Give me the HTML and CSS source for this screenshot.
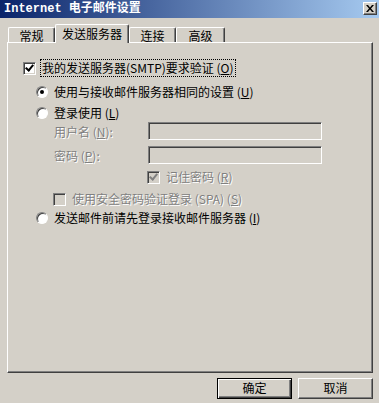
FILE: index.html
```html
<!DOCTYPE html>
<html lang="zh-CN">
<head>
  <meta charset="UTF-8" />
  <title>Internet 电子邮件设置</title>
  <link rel="stylesheet" href="styles.css">
</head>
<body>
  <div class="window">

    <!-- Title bar -->
    <div class="titlebar">
      <span class="title">Internet 电子邮件设置</span>
      <span class="close">
        <svg width="8" height="7" viewBox="0 0 8 7">
          <path d="M0 0h2l2 2.5L6 0h2L5 3.5 8 7H6L4 4.5 2 7H0l3-3.5z" fill="#000"/>
        </svg>
      </span>
    </div>

    <!-- Tabs -->
    <div class="tabs">
      <div class="tab tab-general">常规</div>
      <div class="tab tab-server selected">发送服务器</div>
      <div class="tab tab-conn">连接</div>
      <div class="tab tab-adv">高级</div>
    </div>

    <!-- Outgoing server page -->
    <div class="panel">
      <div class="row row-auth">
        <span class="check checked"></span>
        <span class="label focus">我的发送服务器(SMTP)要求验证 (<u>O</u>)</span>
      </div>

      <div class="row row-same">
        <span class="radio checked"></span>
        <span class="label">使用与接收邮件服务器相同的设置 (<u>U</u>)</span>
      </div>

      <div class="row row-login">
        <span class="radio"></span>
        <span class="label">登录使用 (<u>L</u>)</span>
      </div>

      <div class="row row-field row-user">
        <span class="field-label disabled">用户名 (<u>N</u>):</span>
        <span class="input"></span>
      </div>

      <div class="row row-field row-pass">
        <span class="field-label disabled">密码 (<u>P</u>):</span>
        <span class="input"></span>
      </div>

      <div class="row row-remember">
        <span class="check checked off"></span>
        <span class="label disabled">记住密码 (<u>R</u>)</span>
      </div>

      <div class="row row-spa">
        <span class="check off"></span>
        <span class="label disabled">使用安全密码验证登录 (SPA) (<u>S</u>)</span>
      </div>

      <div class="row row-before">
        <span class="radio"></span>
        <span class="label">发送邮件前请先登录接收邮件服务器 (<u>I</u>)</span>
      </div>
    </div>

    <!-- Dialog buttons -->
    <div class="buttons">
      <div class="button default">确定</div>
      <div class="button">取消</div>
    </div>

  </div>
</body>
</html>
```

FILE: styles.css
```css
* {
  box-sizing: border-box;
}

body {
  margin: 0;
  background: #d4d0c8;
  font-family: "Noto Sans CJK SC", "Noto Sans", sans-serif;
  font-size: 12px;
  color: #000;
}

.window {
  width: 379px;
  height: 403px;
  overflow: hidden;
}

/* title bar */
.titlebar {
  height: 18px;
  background: linear-gradient(to right, #0a246a, #a6caf0);
  display: flex;
  align-items: center;
  justify-content: space-between;
  padding: 0 2px 0 4px;
}
.title {
  color: #fff;
  font-family: "Liberation Mono", "Noto Sans CJK SC", monospace;
  font-weight: bold;
  font-size: 12px;
  line-height: 18px;
}
.close {
  width: 14px;
  height: 13px;
  background: #d4d0c8;
  border-top: 1px solid #fff;
  border-left: 1px solid #fff;
  border-right: 1px solid #404040;
  border-bottom: 1px solid #404040;
  box-shadow: inset -1px -1px #808080;
  display: flex;
  align-items: center;
  justify-content: center;
  margin-top: -1px;
}

/* tabs */
.tabs {
  display: flex;
  align-items: flex-end;
  height: 18px;
  margin-top: 6px;
  padding-left: 8px;
}
.tab {
  height: 15px;
  border-top: 1px solid #fff;
  border-left: 1px solid #fff;
  border-right: 1px solid #404040;
  box-shadow: inset -1px 0 #808080;
  border-radius: 2px 2px 0 0;
  text-align: center;
  line-height: 15px;
  background: #d4d0c8;
}
.tab.selected {
  height: 19px;
  margin-bottom: -1px;
  line-height: 17px;
  position: relative;
  z-index: 1;
}
.tab-general { width: 47px; }
.tab-server  { width: 74px; }
.tab-conn    { width: 47px; }
.tab-adv     { width: 49px; }

/* page */
.panel {
  width: 366px;
  height: 331px;
  margin-left: 7px;
  border-top: 1px solid #fff;
  border-left: 1px solid #fff;
  border-right: 1px solid #404040;
  border-bottom: 1px solid #404040;
  box-shadow: inset -1px -1px #808080;
  padding-top: 15px;
}

.row {
  display: flex;
  align-items: center;
  height: 18px;
}
.row-auth     { height: 20px; padding-left: 15px; }
.row-same     { height: 20px; margin-top: 4px; padding-left: 28px; }
.row-login    { margin-top: 2px; padding-left: 28px; }
.row-field    { padding-left: 45px; }
.row-pass     { margin-top: 6px; }
.row-remember { margin-top: 4px; padding-left: 139px; }
.row-spa      { margin-top: 4px; padding-left: 45px; }
.row-before   { margin-top: 1px; padding-left: 28px; }

.label {
  margin-left: 5px;
  line-height: 16px;
  padding: 0 1px;
  white-space: nowrap;
}
.label.focus {
  outline: 1px dotted #000;
  outline-offset: 0;
}
.disabled {
  color: #808080;
  text-shadow: 1px 1px 0 #fff;
}

/* checkbox */
.check {
  width: 13px;
  height: 13px;
  flex: none;
  background: #fff;
  border-top: 1px solid #808080;
  border-left: 1px solid #808080;
  border-right: 1px solid #fff;
  border-bottom: 1px solid #fff;
  box-shadow: inset 1px 1px #404040, inset -1px -1px #d4d0c8;
  position: relative;
}
.check.off {
  background: #d4d0c8;
}
.check.checked::after {
  content: '';
  position: absolute;
  left: 2px;
  top: 0px;
  width: 3px;
  height: 6px;
  border-right: 2px solid #000;
  border-bottom: 2px solid #000;
  transform: rotate(40deg);
  transform-origin: 50% 50%;
  margin-left: 1px;
}
.check.checked.off::after {
  border-color: #808080;
}

/* radio */
.radio {
  width: 12px;
  height: 12px;
  flex: none;
  border-radius: 50%;
  background: #fff;
  border-top: 1px solid #808080;
  border-left: 1px solid #808080;
  border-right: 1px solid #fff;
  border-bottom: 1px solid #fff;
  box-shadow: inset 1px 1px #404040;
  position: relative;
}
.radio.checked::after {
  content: '';
  position: absolute;
  left: 3px;
  top: 3px;
  width: 4px;
  height: 4px;
  border-radius: 50%;
  background: #000;
}

/* text fields */
.field-label {
  width: 94px;
  margin-left: 1px;
  white-space: nowrap;
}
.input {
  width: 174px;
  height: 18px;
  background: #d4d0c8;
  border-top: 1px solid #808080;
  border-left: 1px solid #808080;
  border-right: 1px solid #fff;
  border-bottom: 1px solid #fff;
  box-shadow: inset 1px 1px #404040, inset -1px -1px #d4d0c8;
}

/* buttons */
.buttons {
  display: flex;
  justify-content: flex-end;
  gap: 6px;
  margin-top: 5px;
  padding-right: 6px;
}
.button {
  width: 75px;
  height: 21px;
  text-align: center;
  line-height: 18px;
  background: #d4d0c8;
  border-top: 1px solid #fff;
  border-left: 1px solid #fff;
  border-right: 1px solid #404040;
  border-bottom: 1px solid #404040;
  box-shadow: inset -1px -1px #808080;
}
.button.default {
  border: 1px solid #000;
  box-shadow: inset 1px 1px #fff, inset -1px -1px #404040, inset -2px -2px #808080;
}
```
